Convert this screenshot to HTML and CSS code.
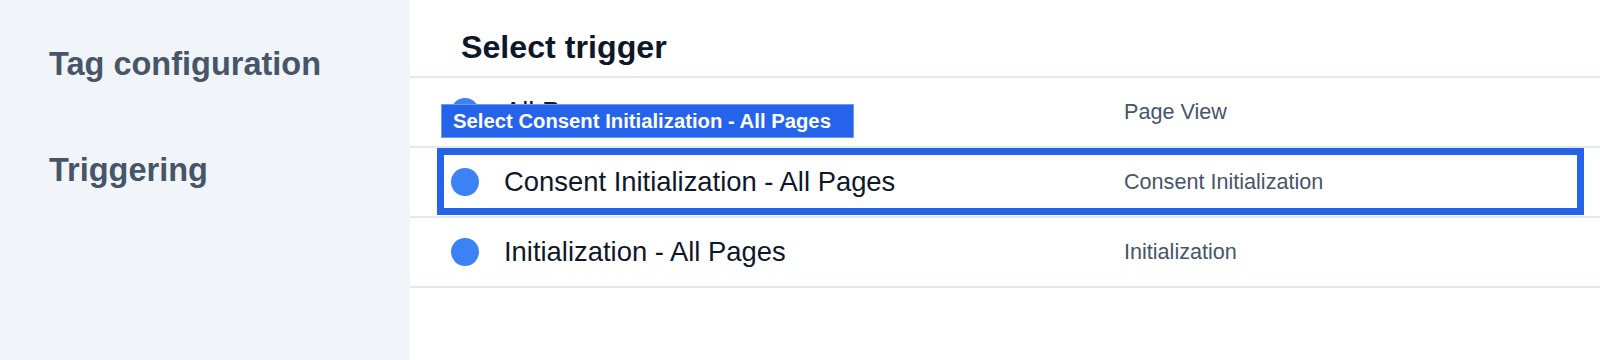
FILE: index.html
```html
<!DOCTYPE html>
<html lang="en">
<head>
    <meta charset="UTF-8">
    <meta name="viewport" content="width=device-width, initial-scale=1.0">
    <title>Select trigger</title>
    <link rel="stylesheet" href="styles.css">
</head>
<body>
    <div class="layout">
        <aside class="sidebar">
            <div class="nav-item">Tag configuration</div>
            <div class="nav-item">Triggering</div>
        </aside>

        <main class="main">
            <div class="header">
                <h2>Select trigger</h2>
            </div>

            <div class="trigger-list">
                <div class="row">
                    <span class="dot"></span>
                    <span class="name">All Pages</span>
                    <span class="type">Page View</span>
                    <div class="tooltip">Select Consent Initialization - All Pages</div>
                </div>
                <div class="row">
                    <span class="dot"></span>
                    <span class="name">Consent Initialization - All Pages</span>
                    <span class="type">Consent Initialization</span>
                    <div class="focus-ring"></div>
                </div>
                <div class="row">
                    <span class="dot"></span>
                    <span class="name">Initialization - All Pages</span>
                    <span class="type">Initialization</span>
                </div>
            </div>
        </main>
    </div>
</body>
</html>
```

FILE: styles.css
```css
html, body {
    margin: 0;
    padding: 0;
    height: 100%;
    background-color: #ffffff;
}

body {
    font-family: "Liberation Sans", Arial, sans-serif;
}

.layout {
    display: flex;
    height: 100vh;
}

/* Left navigation */
.sidebar {
    flex: 0 0 410px;
    background-color: #f1f5f9;
    padding: 46px 0 0 49px;
    box-sizing: border-box;
    display: flex;
    flex-direction: column;
    gap: 70px;
}

.nav-item {
    font-size: 32.5px;
    font-weight: bold;
    line-height: 36px;
    color: #475569;
}

/* Main panel */
.main {
    flex: 1;
    display: flex;
    flex-direction: column;
}

.header {
    padding: 29px 0 0 51px;
    height: 78px;
    box-sizing: border-box;
    border-bottom: 2px solid #e2e8f0;
}

.header h2 {
    margin: 0;
    font-size: 32.2px;
    line-height: 36px;
    font-weight: bold;
    color: #0f172a;
}

.row {
    position: relative;
    display: grid;
    grid-template-columns: 28px 595px 1fr;
    column-gap: 25px;
    align-items: center;
    height: 68px;
    padding-left: 41px;
    border-bottom: 2px solid #e2e8f0;
}

.dot {
    width: 28px;
    height: 28px;
    border-radius: 50%;
    background-color: #3b82f6;
}

.name {
    font-size: 27.4px;
    color: #0f172a;
}

.type {
    font-size: 21.6px;
    color: #475569;
}

/* Hover tooltip */
.tooltip {
    position: absolute;
    top: 26px;
    left: 31px;
    height: 34px;
    line-height: 33px;
    padding: 0 22px 0 11px;
    box-sizing: border-box;
    background-color: #2563eb;
    border: 1px solid #6b9af0;
    color: #ffffff;
    font-size: 20.3px;
    font-weight: bold;
    white-space: nowrap;
}

/* Keyboard focus highlight */
.focus-ring {
    position: absolute;
    top: 0;
    bottom: 1px;
    left: 27px;
    right: 16px;
    border: 7px solid #2563eb;
}
```
